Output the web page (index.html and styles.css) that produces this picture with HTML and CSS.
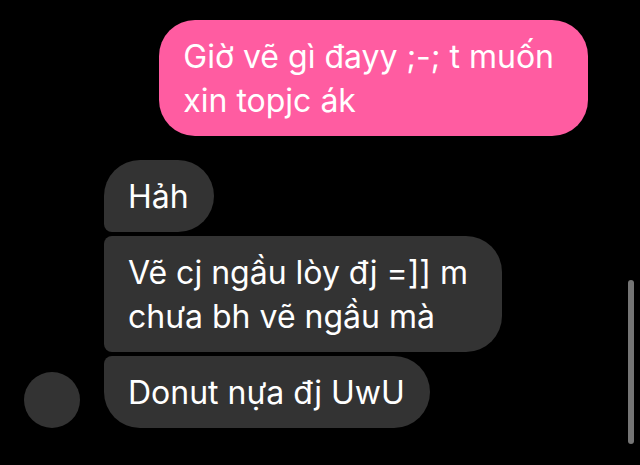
FILE: index.html
```html
<!DOCTYPE html>
<html lang="vi">
<head>
    <meta charset="UTF-8">
    <meta name="viewport" content="width=device-width, initial-scale=1.0">
    <title>Chat</title>
    <link rel="stylesheet" href="styles.css">
</head>
<body>

<main class="chat">
    <div class="row sent">
        <p class="bubble">Giờ vẽ gì đayy ;-; t muốn&nbsp;<br>xin topjc ák</p>
    </div>

    <div class="row received">
        <div class="avatar"></div>
        <div class="group">
            <p class="bubble">Hảh</p>
            <p class="bubble">Vẽ cj ngầu lòy đj =]] m&nbsp;<br>chưa bh vẽ ngầu mà</p>
            <p class="bubble">Donut nựa đj UwU</p>
        </div>
    </div>
</main>

<div class="scrollbar"></div>

</body>
</html>
```

FILE: styles.css
```css
body {
    margin: 0;
    background-color: #000;
    color: #fff;
    font-family: Inter, "Noto Sans", sans-serif;
    font-size: 32px;
    line-height: 44px;
}
.chat {
    display: flex;
    flex-direction: column;
    gap: 24px;
    padding: 20px 52px 20px 24px;
}
.row {
    display: flex;
    align-items: flex-end;
    gap: 24px;
}
.sent {
    justify-content: flex-end;
}
.group {
    display: flex;
    flex-direction: column;
    align-items: flex-start;
    gap: 4px;
}
.bubble {
    margin: 0;
    padding: 15px 25px 13px 24px;
    border-radius: 36px;
    background-color: #333;
}
.sent .bubble {
    background-color: #ff5ca1;
}
/* 連続するメッセージは左側の角を小さくする */
.received .bubble:not(:first-child) {
    border-top-left-radius: 8px;
}
.received .bubble:not(:last-child) {
    border-bottom-left-radius: 8px;
}
.avatar {
    flex: none;
    width: 56px;
    height: 56px;
    border-radius: 50%;
    background-color: #333;
}
.scrollbar {
    position: absolute;
    right: 6px;
    bottom: 21px;
    width: 6px;
    height: 164px;
    border-radius: 3px;
    background-color: #757575;
}
```
